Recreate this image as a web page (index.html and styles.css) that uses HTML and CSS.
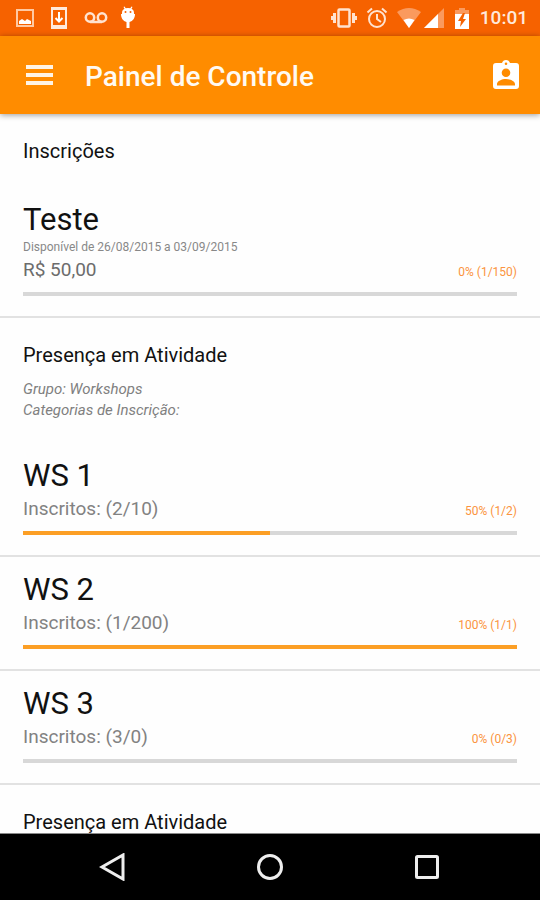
FILE: index.html
```html
<!DOCTYPE html>
<html lang="pt-BR">
<head>
<meta charset="utf-8">
<meta name="viewport" content="width=device-width, initial-scale=1">
<title>Painel de Controle</title>
<link rel="stylesheet" href="styles.css">
</head>
<body>
<div class="status-bar">
  <div class="status-left">
    <svg width="18" height="18" viewBox="0 0 18 18" fill="none"><rect x="1" y="1" width="16" height="16" stroke="#ffc9a3" stroke-width="2"/><path d="M3 15v-3l3-2 3 2 2-2 4 2v3z" fill="#fff"/></svg>
    <svg width="18" height="24" viewBox="0 0 18 24"><path fill="#ffe9dc" fill-rule="evenodd" d="M1 1h16v22H1zM3 4v15h12V4z"/><path d="M9 6v9M5.500 12L9 15.500 12.500 12" fill="none" stroke="#fff" stroke-width="2"/></svg>
    <svg width="24" height="14" viewBox="0 0 24 14" fill="none" stroke="#ffe3d0" stroke-width="2.500"><circle cx="6" cy="6.500" r="4.200"/><circle cx="18" cy="6.500" r="4.200"/><path d="M6 11h12"/></svg>
    <svg class="android" width="16" height="24" viewBox="0 0 16 24"><path fill="#fff" d="M1 8h14c0 4-2 7-5.500 8v6h-3v-6C3 15 1 12 1 8zM2 7c0-2 1-3.500 2.500-4.200L3.500 1l1-.5 1.200 1.800q2.300-.6 4.600 0L11.500.5l1 .5-1 1.800C13 3.500 14 5 14 7v2H2z"/><circle cx="5.500" cy="6" r="1" fill="#f66200"/><circle cx="10.500" cy="6" r="1" fill="#f66200"/></svg>
  </div>
  <div class="status-right">
    <svg width="28" height="22" viewBox="0 0 28 22" fill="none" stroke="#ffe3d0"><rect x="8.500" y="2.500" width="11" height="17" rx="1" stroke-width="2.500"/><path d="M4.500 6v10M23.500 6v10" stroke-width="3"/><path d="M2 9v4M26 9v4" stroke-width="2"/></svg>
    <svg class="alarm" width="22" height="22" viewBox="0 0 22 22" fill="none" stroke="#ffe3d0" stroke-width="2"><circle cx="11" cy="12" r="8"/><path d="M11 7v5l4 3M1.500 5.500L6 1.500M20.500 5.500L16 1.500"/></svg>
    <svg class="wifi" width="26" height="20" viewBox="0 0 26 20"><path d="M1 4Q13-4 25 4L13 20z" fill="#fa9a5e"/><path d="M7.500 12q5.500-3 11 0L13 20z" fill="#fff"/></svg>
    <svg class="signal" width="20" height="20" viewBox="0 0 20 20"><path d="M20 0v20H0z" fill="#fa9a5e"/><path d="M14 6v14H0z" fill="#fff"/></svg>
    <svg class="battery" width="16" height="21" viewBox="0 0 16 21"><path d="M5 0h6v2h4v5H1V2h4z" fill="#fa9a5e"/><path d="M1 6h14v15H1z" fill="#fff"/><path d="M9 5l-5 8h3l-1 6 6-8H9l2-6z" fill="#f66200"/></svg>
    <span class="clock">10:01</span>
  </div>
</div>
<header class="app-bar">
  <button aria-label="Menu"><svg width="27" height="20" viewBox="0 0 27 20"><path d="M0 2h27M0 10h27M0 18h27" stroke="#fff4e5" stroke-width="4"/></svg></button>
  <h1>Painel de Controle</h1>
  <button aria-label="Credencial"><svg width="28" height="30" viewBox="0 0 28 30"><path fill="#fff" fill-rule="evenodd" d="M4 3h6a4.200 4.200 0 0 1 8 0h6q3 0 3 3v20q0 3-3 3H4q-3 0-3-3V6q0-3 3-3zM14 2.500a1.300 1.300 0 1 0 0 2.600 1.300 1.300 0 0 0 0-2.600zM14 8.500a4.300 4.300 0 1 0 0 8.600 4.300 4.300 0 0 0 0-8.600zM5 25.500h18v-1.500c0-3-5-5-9-5s-9 2-9 5z"/></svg></button>
</header>
<main>
  <section>
    <div class="section-head"><h2>Inscrições</h2></div>
    <article class="row">
      <h3>Teste</h3>
      <p class="note">Disponível de 26/08/2015 a 03/09/2015</p>
      <div class="line"><span class="price">R$ 50,00</span><label class="rate" for="p0">0% (1/150)</label></div>
      <progress id="p0" value="0" max="100"></progress>
    </article>
  </section>
  <section>
    <div class="section-head">
      <h2>Presença em Atividade</h2>
      <p class="details">Grupo: Workshops<br>Categorias de Inscrição:</p>
    </div>
    <article class="row">
      <h3>WS 1</h3>
      <div class="line"><span>Inscritos: (2/10)</span><label class="rate" for="p1">50% (1/2)</label></div>
      <progress id="p1" value="50" max="100"></progress>
    </article>
    <article class="row">
      <h3>WS 2</h3>
      <div class="line"><span>Inscritos: (1/200)</span><label class="rate" for="p2">100% (1/1)</label></div>
      <progress id="p2" value="100" max="100"></progress>
    </article>
    <article class="row">
      <h3>WS 3</h3>
      <div class="line"><span>Inscritos: (3/0)</span><label class="rate" for="p3">0% (0/3)</label></div>
      <progress id="p3" value="0" max="100"></progress>
    </article>
  </section>
  <section>
    <div class="section-head"><h2>Presença em Atividade</h2></div>
  </section>
</main>
<nav class="nav-bar">
  <button aria-label="Voltar"><svg width="28" height="28" viewBox="0 0 28 28"><path d="M24 2v24L3 14z"/></svg></button>
  <button aria-label="Início"><svg width="28" height="28" viewBox="0 0 28 28"><circle cx="14" cy="14" r="11.500"/></svg></button>
  <button aria-label="Recentes"><svg width="28" height="28" viewBox="0 0 28 28"><rect x="3.500" y="3.500" width="21" height="21" rx="1"/></svg></button>
</nav>
</body>
</html>
```
FILE: styles.css
```css
* { box-sizing: border-box; }

body {
  margin: 0;
  height: 100vh;
  display: flex;
  flex-direction: column;
  background: #fefefe;
  color: #111;
  font-family: Roboto, "Liberation Sans", sans-serif;
}

h1, h2, h3, p { margin: 0; font-weight: 400; }

svg { display: block; flex: none; }

button {
  padding: 0;
  border: 0;
  background: none;
  cursor: pointer;
}

.status-bar {
  flex: none;
  height: 36px;
  padding: 0 12px 0 16px;
  display: flex;
  align-items: center;
  justify-content: space-between;
  background: #f66200;
}

.status-left, .status-right { display: flex; align-items: center; }
.status-left { gap: 16px; }
.status-left .android { margin-left: -4px; }

.alarm { margin-left: 8px; }
.wifi { margin-left: 8px; }
.signal { margin-left: 2px; }
.battery { margin-left: 10px; }

.clock {
  margin-left: 10px;
  color: #ffe9dc;
  font-size: 19px;
  font-weight: 500;
  line-height: 36px;
}

.app-bar {
  flex: none;
  height: 78px;
  padding: 0 20px 0 26px;
  display: flex;
  align-items: center;
  background: #ff8c00;
  box-shadow: 0 1px 6px rgba(0, 0, 0, 0.4);
  z-index: 1;
}

.app-bar h1 {
  flex: 1;
  margin-left: 32px;
  padding-top: 4px;
  color: #fffaf2;
  font-size: 28px;
  font-weight: 500;
  line-height: 36px;
}

main { flex: 1; min-height: 0; overflow: hidden; }

.section-head { padding: 25px 23px 22px; }

.section-head:has(h2:only-child) { padding-bottom: 24px; }

.section-head h2 {
  font-size: 20px;
  line-height: 24px;
}

.details {
  margin-top: 12px;
  color: #808080;
  font-size: 15px;
  font-style: italic;
  line-height: 21px;
}

.row {
  padding: 14px 23px 20px;
  border-bottom: 2px solid #e2e2e2;
}

.row h3 {
  font-size: 31px;
  line-height: 38px;
}

.note {
  color: #888;
  font-size: 12px;
  line-height: 17px;
}

.line {
  display: flex;
  align-items: center;
  justify-content: space-between;
  color: #828282;
  font-size: 19px;
  line-height: 28px;
}

.price { color: #6c6c6c; }

.rate {
  padding-top: 4px;
  color: #fb9440;
  font-size: 12px;
  line-height: 24px;
}

progress {
  display: block;
  width: 100%;
  height: 4px;
  margin-top: 8px;
  border: 0;
  appearance: none;
  background: #d8d8d8;
}

progress::-webkit-progress-bar { background: #d8d8d8; }
progress::-webkit-progress-value { background: #fc9f25; }

.nav-bar {
  flex: none;
  height: 67px;
  padding: 0 34px;
  display: flex;
  border-top: 1px solid #888;
  background: #000;
}

.nav-bar button {
  flex: 1;
  display: flex;
  align-items: center;
  justify-content: center;
}

.nav-bar path, .nav-bar circle, .nav-bar rect {
  fill: none;
  stroke: #eee;
  stroke-width: 3;
}
```
